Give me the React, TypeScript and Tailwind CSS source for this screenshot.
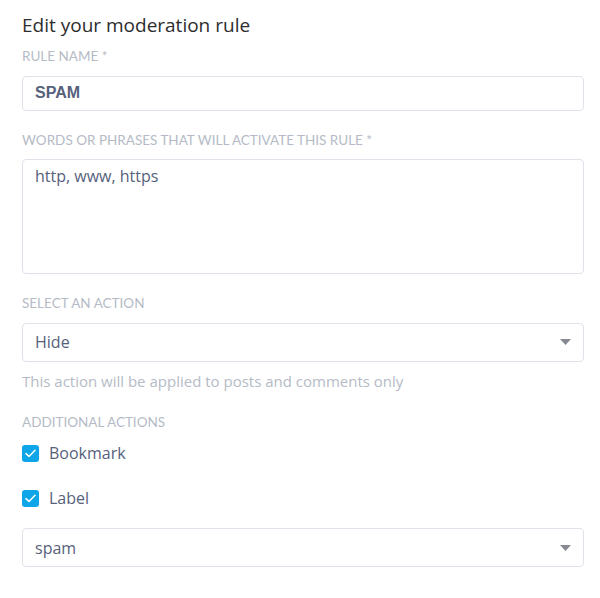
import React, { useState } from 'react';

const labelCls = "block text-[13.5px] uppercase text-[#b5bbc6] font-['Lato',sans-serif] leading-none";
const frameCls = "w-full rounded border border-[#dfe2e8] bg-white px-3 text-[16px] text-[#56617b] focus:outline-none";
const boxCls = `${frameCls} font-medium font-['Open_Sans',sans-serif]`;

function Check({ checked, onChange, label }: { checked: boolean; onChange: () => void; label: string }) {
  return (
    <label className="flex items-center gap-[10px] cursor-pointer">
      <span
        onClick={onChange}
        className={`flex h-[17px] w-[17px] items-center justify-center rounded-[3px] ${checked ? 'bg-[#0ea5e9]' : 'border border-[#c7ccd6] bg-white'}`}
      >
        {checked && (
          <svg width="11" height="9" viewBox="0 0 11 9" fill="none">
            <path d="M1 4.6 L4 7.4 L10 1.2" stroke="white" strokeWidth="1.5" strokeLinecap="round" strokeLinejoin="round" />
          </svg>
        )}
      </span>
      <span className="text-[16px] font-medium leading-[24px] text-[#56617b] font-['Open_Sans',sans-serif]">{label}</span>
    </label>
  );
}

function Caret() {
  return (
    <svg className="pointer-events-none absolute right-[13px] top-1/2 -translate-y-1/2" width="11" height="6" viewBox="0 0 11 6">
      <path d="M0 0 H11 L5.5 6 Z" fill="#858a93" />
    </svg>
  );
}

export default function App() {
  const [name, setName] = useState('SPAM');
  const [words, setWords] = useState('http, www, https');
  const [bookmark, setBookmark] = useState(true);
  const [label, setLabel] = useState(true);

  return (
    <div className="min-h-[598px] w-[600px] bg-white pl-[22px] pr-[16px] pt-[12px]">
      <h2 className="text-[19px] leading-[26px] text-[#2d2d2d] font-['Open_Sans',sans-serif]">Edit your moderation rule</h2>

      <div className="mt-[12px]">
        <span className={labelCls}>Rule name *</span>
        <input
          className={`${frameCls} mt-[12px] h-[35px] font-bold font-['Liberation_Sans',sans-serif]`}
          value={name}
          onChange={(e) => setName(e.target.value)}
        />
      </div>

      <div className="mt-[23px]">
        <span className={labelCls}>Words or phrases that will activate this rule *</span>
        <textarea
          className={`${boxCls} mt-[12px] block h-[115px] resize-none py-[4px] leading-[24px]`}
          value={words}
          onChange={(e) => setWords(e.target.value)}
        />
      </div>

      <div className="mt-[23px]">
        <span className={labelCls}>Select an action</span>
        <div className="relative mt-[12px]">
          <div className={`${boxCls} flex h-[39px] items-center`}>Hide</div>
          <Caret />
        </div>
        <p className="mt-[9px] text-[15px] leading-[20px] text-[#b5bbc6] font-['Open_Sans',sans-serif]">This action will be applied to posts and comments only</p>
      </div>

      <div className="mt-[25px]">
        <span className={labelCls}>Additional actions</span>
        <div className="mt-[12px] flex flex-col gap-[21px]">
          <Check checked={bookmark} onChange={() => setBookmark(!bookmark)} label="Bookmark" />
          <Check checked={label} onChange={() => setLabel(!label)} label="Label" />
        </div>
        <div className="relative mt-[18px]">
          <div className={`${boxCls} flex h-[39px] items-center`}>spam</div>
          <Caret />
        </div>
      </div>
    </div>
  );
}
